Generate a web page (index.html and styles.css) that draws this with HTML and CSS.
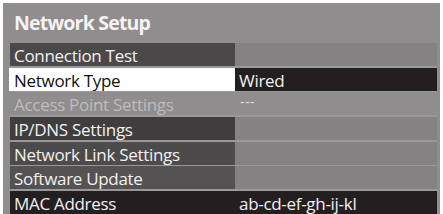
FILE: index.html
```html
<!DOCTYPE html>
<html>
<head>
<meta charset="utf-8">
<link rel="stylesheet" href="styles.css">
</head>
<body>
<div class="panel">
  <div class="title">Network Setup</div>
  <div class="rows">
    <div class="row"><div class="label dark1">Connection Test</div><div class="value"></div></div>
    <div class="row"><div class="label selected">Network Type</div><div class="value black">Wired</div></div>
    <div class="row"><div class="label disabled">Access Point Settings</div><div class="value plain"><span class="dashes">---</span></div></div>
    <div class="row"><div class="label dark2">IP/DNS Settings</div><div class="value"></div></div>
    <div class="row"><div class="label dark3">Network Link Settings</div><div class="value"></div></div>
    <div class="row"><div class="label dark4">Software Update</div><div class="value"></div></div>
    <div class="row"><div class="label black">MAC Address</div><div class="value black">ab-cd-ef-gh-ij-kl</div></div>
  </div>
</div>
</body>
</html>
```

FILE: styles.css
```css
html, body {
  margin: 0;
  padding: 0;
  background: #ffffff;
}
body {
  width: 443px;
  height: 214px;
  overflow: hidden;
  font-family: "Open Sans", "Liberation Sans", sans-serif;
}
.panel {
  margin: 3px 0 0 3px;
  width: 437px;
  height: 211px;
  background: #8f8d8d;
  box-sizing: border-box;
  padding: 0 3px 0 7px;
  display: flex;
  flex-direction: column;
}
.title {
  height: 40px;
  box-sizing: border-box;
  padding: 8px 0 0 4px;
  font-size: 19.5px;
  line-height: 24px;
  font-weight: 700;
  letter-spacing: -0.8px;
  color: #f4f2f2;
}
.rows {
  display: flex;
  flex-direction: column;
  gap: 1.67px;
  background: #9a9898;
}
.row {
  display: grid;
  grid-template-columns: 225px 202px;
  height: 23px;
  background: #8f8d8d;
}
.label, .value {
  box-sizing: border-box;
  padding: 2px 0 0 4px;
  font-size: 17px;
  line-height: 21px;
  letter-spacing: -0.3px;
  color: #f2f0f0;
  white-space: nowrap;
  overflow: hidden;
}
.value {
  background: #848282;
}
.value.plain {
  background: #8f8d8d;
}
.dark1 { background: #4a4848; }
.dark2 { background: #3f3d3d; }
.dark3 { background: #4c4a4a; }
.dark4 { background: #545252; }
.black { background: #231f20; }
.selected {
  background: #ffffff;
  color: #111111;
  margin-left: -1px;
  padding-left: 5px;
}
.disabled {
  color: #bebcbc;
  background: #8f8d8d;
}
.dashes {
  display: inline-block;
  font-size: 14px;
  line-height: 14px;
  color: #e0dede;
  letter-spacing: 0.5px;
  vertical-align: top;
  position: relative;
  top: 1px;
  left: 1px;
}
```
